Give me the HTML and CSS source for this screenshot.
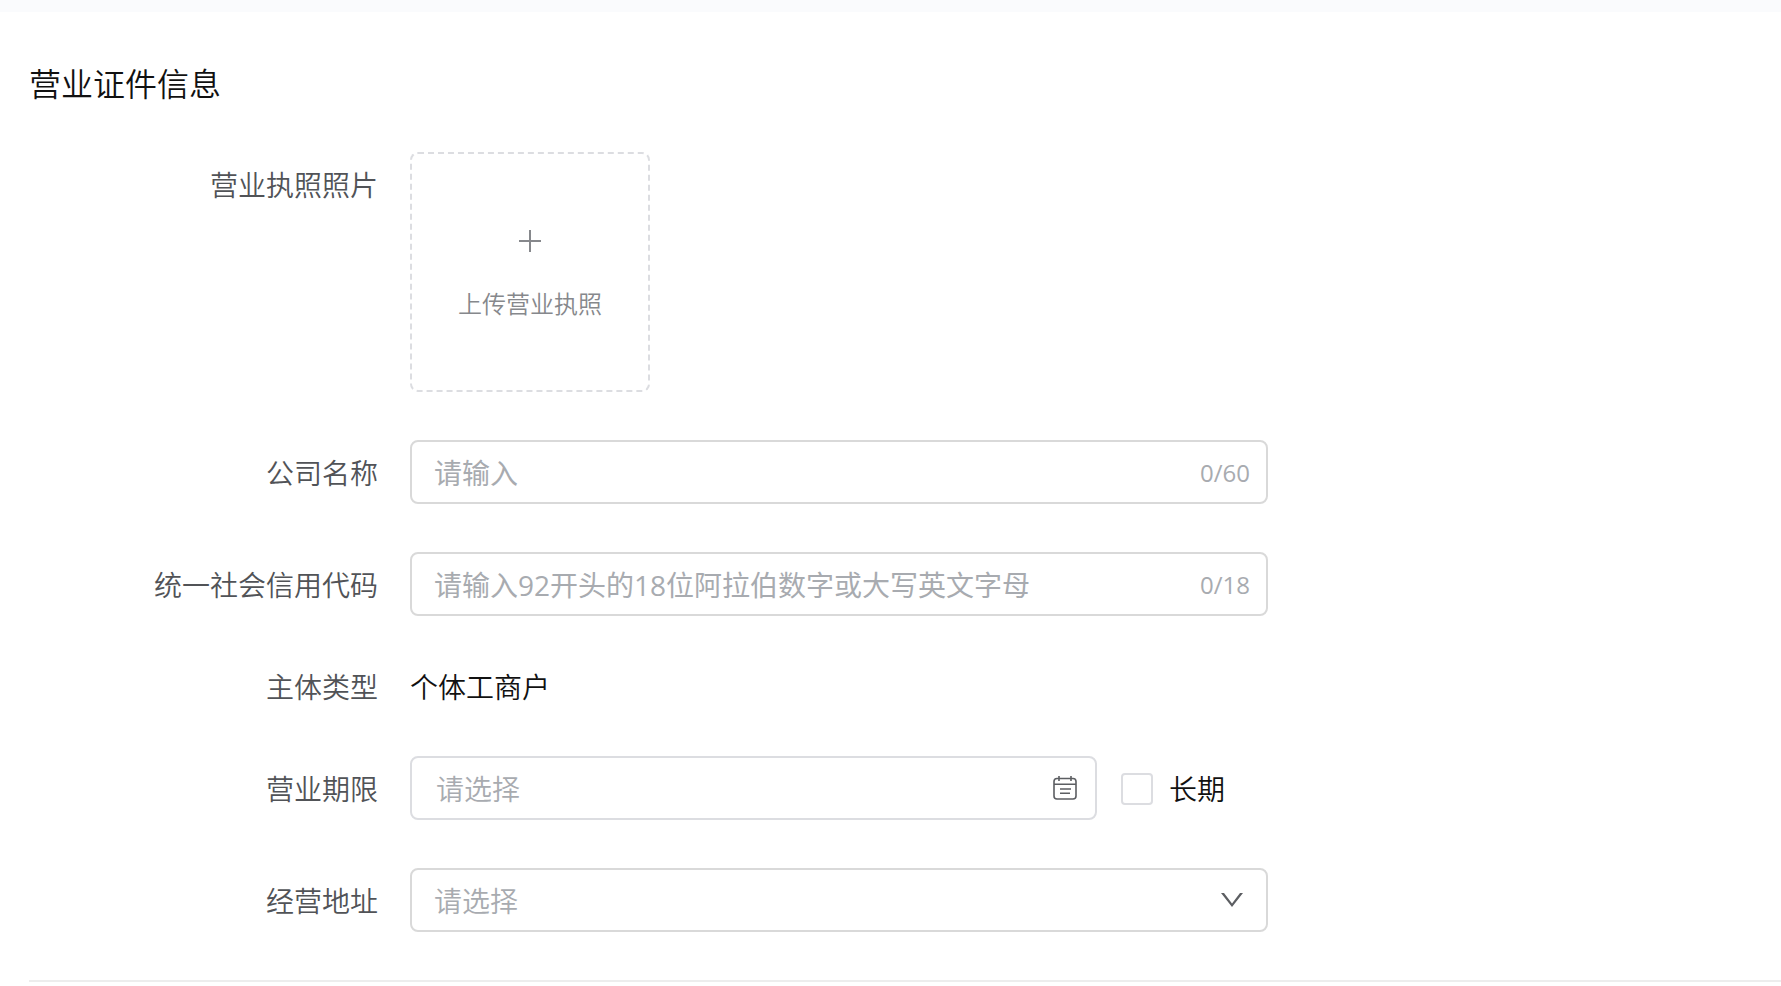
FILE: index.html
```html
<!DOCTYPE html>
<html lang="zh-CN">
<head>
	<meta charset="utf-8">
	<title>营业证件信息</title>
	<link rel="stylesheet" href="styles.css">
</head>
<body>
	<form class="panel">
		<h2 class="title">营业证件信息</h2>
		<!-- 营业执照 -->
		<div class="row">
			<label class="name" for="license">营业执照照片</label>
			<button class="upload" id="license" type="button">
				<svg width="22" height="22" viewBox="0 0 22 22" stroke="currentColor" stroke-width="2"><path d="M0 11h22M11 0v22"/></svg>
				<span>上传营业执照</span>
			</button>
		</div>
		<div class="row">
			<label class="name" for="company">公司名称</label>
			<div class="box">
				<input id="company" type="text" maxlength="60" placeholder="请输入">
				<span class="count">0/60</span>
			</div>
		</div>
		<div class="row">
			<label class="name" for="code">统一社会信用代码</label>
			<div class="box">
				<input id="code" type="text" maxlength="18" placeholder="请输入92开头的18位阿拉伯数字或大写英文字母">
				<span class="count">0/18</span>
			</div>
		</div>
		<div class="row text-row">
			<span class="name">主体类型</span>
			<span class="value">个体工商户</span>
		</div>
		<!-- 营业期限 -->
		<div class="row">
			<label class="name" for="term">营业期限</label>
			<div class="term">
				<div class="box date">
					<input id="term" type="text" placeholder="请选择">
					<svg width="24" height="24" viewBox="0 0 24 24" fill="none" stroke="currentColor" stroke-width="1.6"><rect x="1" y="2.500" width="22" height="20.500" rx="3"/><path d="M1 8.300h22M6 0v5M18 0v5M7 13h11M7 17.300h10"/></svg>
				</div>
				<label class="check"><input type="checkbox">长期</label>
			</div>
		</div>
		<div class="row">
			<label class="name" for="address">经营地址</label>
			<div class="box">
				<select id="address">
					<option value="">请选择</option>
				</select>
				<svg class="arrow" width="22" height="14" viewBox="0 0 22 14" fill="currentColor"><path d="M0 0h3l8 10.500 8-10.500h3L11 14z"/></svg>
			</div>
		</div>
	</form>
</body>
</html>
```
FILE: styles.css
```css
*{margin:0;padding:0;box-sizing:border-box;}
body{border-top:12px solid #fafbfd;background:#fff;color:#111;font-family:"Open Sans","Noto Sans CJK SC",sans-serif;font-size:28px;font-weight:350;}
input,select,button{font:inherit;color:inherit;background:none;border:none;outline:none;}
svg{display:block;flex:none;}
.panel{margin-left:29px;padding-top:48px;padding-bottom:48px;border-bottom:2px solid #ededed;}
.title{font-size:32px;font-weight:350;line-height:48px;margin-bottom:44px;}
.row{display:flex;gap:32px;margin-bottom:48px;line-height:62px;}
.row:last-child{margin-bottom:0;}
.text-row{line-height:42px;}
.name,.value{padding-top:2px;}
.name{width:349px;flex:none;text-align:right;color:#515357;}
.upload{display:flex;flex-direction:column;align-items:center;justify-content:center;gap:36px;width:240px;height:240px;padding-top:6px;border:2px dashed #dcdde1;border-radius:8px;color:#86888c;font-size:24px;line-height:32px;cursor:pointer;}
.box{display:flex;align-items:center;flex:1;max-width:858px;height:64px;padding:0 16px 0 22px;border:2px solid #d9d9d9;border-radius:8px;position:relative;}
.box input,.box select{flex:1;min-width:0;height:60px;}
.box input{padding-top:2px;font-weight:400;}
.box input::placeholder{color:#a8abb0;opacity:1;}
.box select{appearance:none;color:#a8abb0;}
.count{padding-top:2px;font-size:24px;font-weight:400;color:#a8abb0;}
.term{display:flex;align-items:center;gap:24px;flex:1;max-width:858px;}
.date{padding:0 18px 0 24px;border-color:#dcdde1;color:#5c5e62;}
.date input{font-weight:350;}
.check{display:flex;align-items:center;gap:16px;width:147px;padding-top:2px;cursor:pointer;}
.check input{appearance:none;width:32px;height:32px;border:2px solid #dcdde1;border-radius:4px;}
.check input:checked{background:#409eff;}
/* 箭头盖在下拉框上面 */
.arrow{position:absolute;right:23px;top:23px;color:#5c5e62;pointer-events:none;}
```
